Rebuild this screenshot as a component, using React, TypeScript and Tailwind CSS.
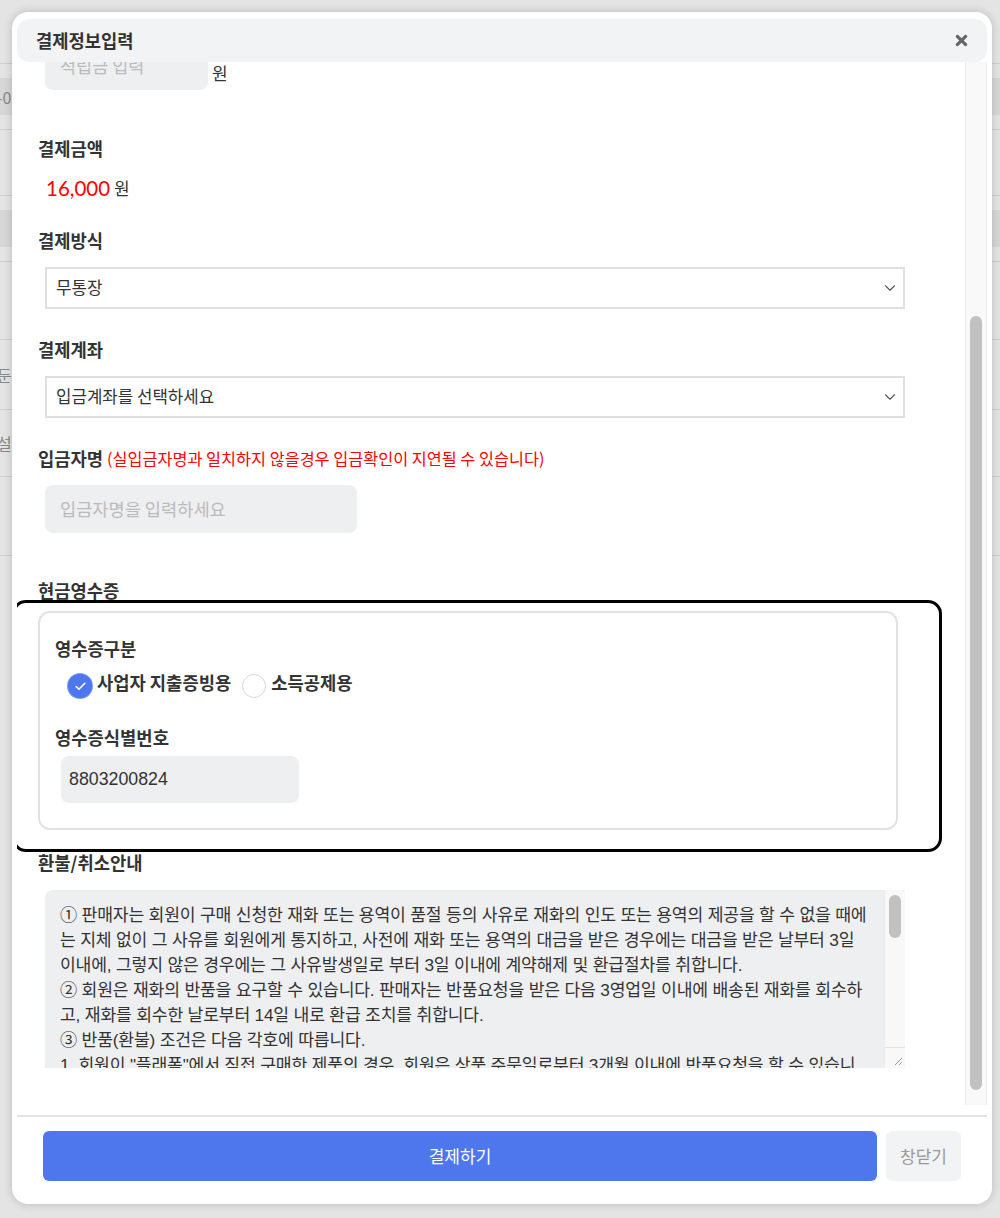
import React from 'react';
import { ChevronDown, Check } from 'lucide-react';
import { FaTimes } from 'react-icons/fa';

const refundLines = [
  '① 판매자는 회원이 구매 신청한 재화 또는 용역이 품절 등의 사유로 재화의 인도 또는 용역의 제공을 할 수 없을 때에',
  '는 지체 없이 그 사유를 회원에게 통지하고, 사전에 재화 또는 용역의 대금을 받은 경우에는 대금을 받은 날부터 3일',
  '이내에, 그렇지 않은 경우에는 그 사유발생일로 부터 3일 이내에 계약해제 및 환급절차를 취합니다.',
  '② 회원은 재화의 반품을 요구할 수 있습니다. 판매자는 반품요청을 받은 다음 3영업일 이내에 배송된 재화를 회수하',
  '고, 재화를 회수한 날로부터 14일 내로 환급 조치를 취합니다.',
  '③ 반품(환불) 조건은 다음 각호에 따릅니다.',
  '1. 회원이 "플래폼"에서 직접 구매한 제품의 경우, 회원은 상품 주문일로부터 3개월 이내에 반품요청을 할 수 있습니',
  '다.',
];

// rows of the page behind the modal
const bgRows = [
  { h: 'h-[64px]', text: '', shade: false },
  { h: 'h-[66px]', text: '-0', shade: true },
  { h: 'h-[66px]', text: '', shade: false },
  { h: 'h-[66px]', text: '', shade: true },
  { h: 'h-[78px]', text: '', shade: false },
  { h: 'h-[70px]', text: '둔', shade: false },
  { h: 'h-[67px]', text: '설', shade: false },
  { h: 'h-[79px]', text: '', shade: false },
];

function Label({ children, className = '' }: { children: React.ReactNode; className?: string }) {
  return <div className={`h-6 whitespace-nowrap leading-6 text-[17.7px] font-bold text-[#333] ${className}`}>{children}</div>;
}

function SelectBox({ value }: { value: string }) {
  return (
    <div className="ml-[7px] mt-[15px] flex h-[42px] w-[860px] items-center justify-between border-2 border-[#dedfe3] bg-white pl-[9px] pr-[4px]">
      <span className="text-[16.8px] text-[#333]">{value}</span>
      <ChevronDown className="h-[18px] w-[18px] text-[#555]" strokeWidth={1.5} />
    </div>
  );
}

export default function App() {
  return (
    <div className="relative h-[1218px] w-[1000px] overflow-hidden bg-[#e4e4e4] font-['Noto_Sans_CJK_KR',sans-serif]">
      {/* page behind the modal */}
      <div className="flex flex-col">
        {bgRows.map((row, i) => (
          <div key={i} className={`${row.h} flex items-center border-b border-[#cfcfcf] py-[14px]`}>
            <div className={`flex h-full w-full items-center ${row.shade ? 'bg-[#d7d7d7]' : ''}`}>
              <span className="-ml-[3px] text-[16px] text-[#888]">{row.text}</span>
            </div>
          </div>
        ))}
      </div>

      {/* modal */}
      <div className="absolute left-[12px] top-[12px] flex h-[1192px] w-[980px] flex-col rounded-[16px] bg-white shadow-[0_0_10px_rgba(0,0,0,0.18)]">
        {/* header */}
        <div className="relative z-20 mx-[5px] mt-[7px] flex h-[43px] items-center justify-between rounded-[12px] bg-[#f2f3f5] pl-[19px] pr-[17px]">
          <span className="text-[17.7px] font-bold text-[#333]">결제정보입력</span>
          <FaTimes className="h-[17px] w-[17px] text-[#666]" />
        </div>

        {/* body */}
        <div className="mx-[5px] flex h-[1043px]">
          <div className="relative flex-1 overflow-hidden">
            <div className="-mt-[20px] flex flex-col pl-[21px]">
              {/* points input */}
              <div className="ml-[7px] flex items-center">
                <div className="flex h-[48px] w-[163px] items-center rounded-[8px] bg-[#eeeff1] pl-[15px] text-[17.5px] text-[#bbb]">
                  적립금 입력
                </div>
                <span className="ml-[4px] mt-[14px] text-[17px] text-[#333]">원</span>
              </div>

              <Label className="mt-[46px]">결제금액</Label>
              <div className="ml-[8px] mt-[14px] flex h-[28px] items-center">
                <span className="font-['Lato',sans-serif] text-[20.5px] text-[#ff0000]">16,000</span>
                <span className="ml-[4px] text-[17px] text-[#333]">원</span>
              </div>

              <Label className="mt-[26px]">결제방식</Label>
              <SelectBox value="무통장" />

              <Label className="mt-[28px]">결제계좌</Label>
              <SelectBox value="입금계좌를 선택하세요" />

              <div className="mt-[28px] flex h-6 items-center whitespace-nowrap">
                <span className="text-[17.7px] font-bold text-[#333]">입금자명</span>
                <span className="ml-[4px] text-[16.3px] text-[#ff0000]">(실입금자명과 일치하지 않을경우 입금확인이 지연될 수 있습니다)</span>
              </div>
              <div className="ml-[7px] mt-[15px] flex h-[48px] w-[312px] items-center rounded-[8px] bg-[#eeeff1] pl-[15px] text-[17.6px] text-[#bbb]">
                입금자명을 입력하세요
              </div>

              <Label className="mt-[45px]">현금영수증</Label>

              {/* highlighted receipt block */}
              <div className="relative z-10 -ml-[26px] -mt-[2px] h-[252px] w-[930px] rounded-[14px] border-[3px] border-black bg-white pl-[23px] pt-[8px]">
                <div className="flex h-[219px] w-[860px] flex-col rounded-[12px] border-2 border-[#e2e2e4] pl-[15px] pt-[23px]">
                  <Label>영수증구분</Label>
                  <div className="ml-[13px] mt-[12px] flex h-[24px] items-center">
                    <span className="mt-[4px] flex h-[24px] w-[24px] items-center justify-center rounded-full bg-[#4e77ee] ring-1 ring-[#7d9af2]">
                      <Check className="h-[13px] w-[13px] text-white" strokeWidth={3} />
                    </span>
                    <span className="-mt-[3px] ml-[5px] text-[17.7px] font-bold text-[#333]">사업자 지출증빙용</span>
                    <span className="ml-[11px] mt-[4px] h-[24px] w-[24px] rounded-full border-[1.5px] border-[#d8d8dc] bg-white" />
                    <span className="-mt-[3px] ml-[5px] text-[17.7px] font-bold text-[#333]">소득공제용</span>
                  </div>
                  <Label className="mt-[29px]">영수증식별번호</Label>
                  <div className="ml-[6px] mt-[7px] flex h-[47px] w-[238px] items-center rounded-[8px] bg-[#eeeff1] pl-[8px] font-['Liberation_Sans','Noto_Sans_CJK_KR',sans-serif] text-[17.8px] text-[#333]">
                    8803200824
                  </div>
                </div>
              </div>

              <Label className="-mt-[2px]">환불/취소안내</Label>

              {/* refund textarea */}
              <div className="ml-[7px] mt-[16px] flex h-[178px] w-[860px] overflow-hidden rounded-tl-[8px] rounded-tr-[2px] bg-[#eeeff1]">
                <div className="flex-1 overflow-hidden pl-[15px] pt-[13px]">
                  {refundLines.map((line, i) => (
                    <div
                      key={i}
                      className="h-[25px] whitespace-nowrap font-['Liberation_Sans','Noto_Sans_CJK_KR',sans-serif] text-[17.2px] leading-[25px] tracking-[-0.2px] text-[#333]"
                    >
                      {line}
                    </div>
                  ))}
                </div>
                <div className="flex w-[21px] flex-col border-l border-[#ececec] bg-[#f8f8f8]">
                  <div className="mx-auto mt-[5px] h-[43px] w-[12px] rounded-full bg-[#c1c1c1]" />
                  <div className="flex-1" />
                  <div className="flex h-[21px] items-end justify-end border-t border-[#e4e4e4] pb-[2px] pr-[2px]">
                    <svg width="10" height="10" viewBox="0 0 10 10">
                      <path d="M9 2 L2 9 M9 6 L6 9" stroke="#999" strokeWidth="1" fill="none" />
                    </svg>
                  </div>
                </div>
              </div>
            </div>
          </div>

          {/* body scrollbar */}
          <div className="flex w-[22px] flex-col border-x border-[#ececec] bg-[#f9f9f9]">
            <div className="mx-auto mt-[254px] h-[774px] w-[12px] rounded-full bg-[#c1c1c1]" />
          </div>
        </div>

        {/* footer */}
        <div className="mx-[5px] mt-[10px] flex gap-[9px] border-t-2 border-[#e4e4e6] px-[26px] pt-[14px]">
          <button className="flex h-[50px] flex-1 items-center justify-center rounded-[6px] bg-[#4e77ee] text-[17px] text-white">
            결제하기
          </button>
          <button className="flex h-[50px] w-[75px] items-center justify-center rounded-[6px] bg-[#f2f3f5] text-[17px] text-[#999]">
            창닫기
          </button>
        </div>
      </div>
    </div>
  );
}
